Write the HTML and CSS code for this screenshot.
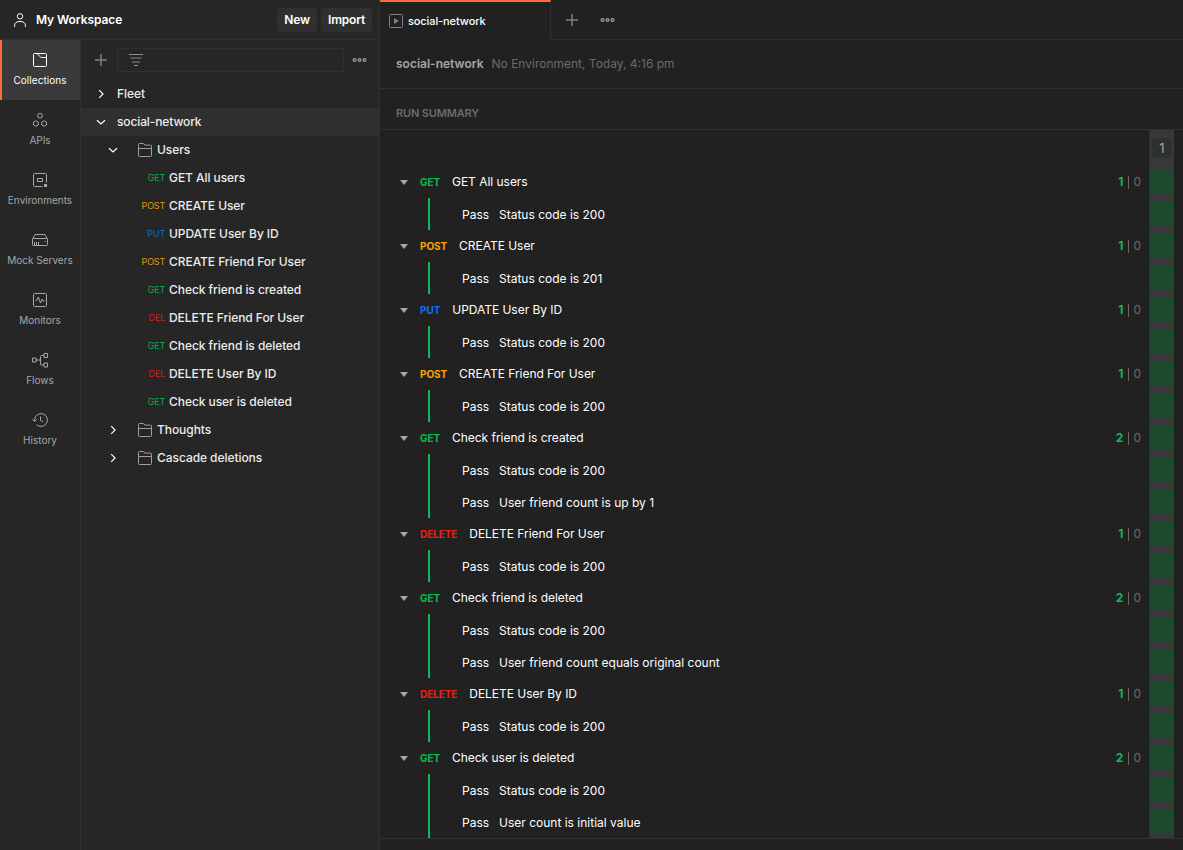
FILE: index.html
```
<!DOCTYPE html>
<html lang="en">
<head>
<meta charset="utf-8">
<title>My Workspace</title>
<link rel="stylesheet" href="styles.css">
</head>
<body>
<svg class="defs" width="0" height="0">
  <symbol id="right" viewBox="0 0 10 10"><path d="M3.2 1.2 7 5 3.2 8.8"/></symbol>
  <symbol id="down" viewBox="0 0 10 10"><path d="M1 3.2 5 7l4-3.8"/></symbol>
  <symbol id="folder" viewBox="0 0 14 14"><path d="M.5 12.5V1.5q0-1 1-1h3.7L7 2.1h5.5q1 0 1 1v9.4q0 1-1 1h-11q-1 0-1-1zM.5 5.5h13"/></symbol>
  <symbol id="dots" viewBox="0 0 15 6"><circle cx="2.5" cy="3" r="1.5"/><circle cx="7.5" cy="3" r="1.5"/><circle cx="12.5" cy="3" r="1.5"/></symbol>
  <symbol id="plus" viewBox="0 0 12 12"><path d="M6 0v12M0 6h12"/></symbol>
</svg>
<div class="app">
  <div class="left">
    <header class="top">
      <svg class="user" width="12" height="14" viewBox="0 0 12 14"><circle cx="6" cy="3.3" r="2.7"/><path d="M.6 14v-1.5Q.6 8.500 6 8.500t5.400 4V14"/></svg>
      <span class="ws">My Workspace</span>
      <button class="btn new">New</button>
      <button class="btn import">Import</button>
    </header>
    <div class="cols">
      <nav class="rail">
        <a class="item active"><svg width="16" height="16" viewBox="0 0 16 16"><path d="M1.500 2.500q0-1 1-1h11q1 0 1 1v11q0 1-1 1h-11q-1 0-1-1zM5 1.500l4 4h5.500"/></svg><span>Collections</span></a>
        <a class="item"><svg width="16" height="16" viewBox="0 0 16 16"><path d="M8 1.300 10.200 2.500v2.600L8 6.300 5.800 5.100V2.500zM3.900 8.800l2.300 1.200v3l-2.300 1.300L1.500 13v-3zM12.100 8.800l2.400 1.200v3l-2.400 1.300L9.800 13v-3z"/></svg><span>APIs</span></a>
        <a class="item"><svg width="16" height="16" viewBox="0 0 16 16"><path d="M10.500 14.500h-8q-1 0-1-1v-11q0-1 1-1h11q1 0 1 1v8M5.500 6.500h5v3h-5z"/><path class="solid" d="M12 12h3v3h-3z"/></svg><span>Environments</span></a>
        <a class="item"><svg width="16" height="16" viewBox="0 0 16 16"><path d="M.5 7.500 3 2.500h10l2.500 5M1.500 6.500h13q1 0 1 1v5q0 1-1 1h-13q-1 0-1-1v-5q0-1 1-1zM2.500 13v-3M4.500 13v-3M6.500 13v-3M12.500 9.500h1"/></svg><span>Mock Servers</span></a>
        <a class="item"><svg width="16" height="16" viewBox="0 0 16 16"><path d="M1.500 2.500q0-1 1-1h11q1 0 1 1v11q0 1-1 1h-11q-1 0-1-1zM3.500 8.500h1.200L6.300 5l2.200 6 1.700-4 1.300 2.500 1-1"/></svg><span>Monitors</span></a>
        <a class="item"><svg width="16" height="16" viewBox="0 0 16 16"><path d="M.5 6h3.500v4H.500zM12 1.500h3.500v4H12zM12 11h3.500v4H12zM4 8h4.500M12 3.500H9.500q-1 0-1 1V12q0 1 1 1H12"/></svg><span>Flows</span></a>
        <a class="item"><svg width="16" height="16" viewBox="0 0 16 16"><path d="M2.600 9V7.500a6.400 6.400 0 1 1 2 5.200M.4 7.300l2.200 2.200 2.200-2.200M8.500 4.500V8.500l2.500 1.200"/></svg><span>History</span></a>
      </nav>
      <aside class="side">
        <div class="tools">
          <svg class="plus" width="12" height="12"><use href="#plus"/></svg>
          <div class="filter"><svg width="14" height="12" viewBox="0 0 14 12"><path d="M0 .5h14M1.500 4h11M3 8h8M5 11.500h4"/></svg></div>
          <svg class="dots" width="15" height="6"><use href="#dots"/></svg>
        </div>
        <div class="row"><svg class="chev" width="10" height="10"><use href="#right"/></svg>Fleet</div>
        <div class="row selected"><svg class="chev" width="10" height="10"><use href="#down"/></svg>social-network</div>
        <div class="row sub"><svg class="chev" width="10" height="10"><use href="#down"/></svg><svg class="folder" width="14" height="14"><use href="#folder"/></svg>Users</div>
        <div class="row req"><i class="get">GET</i>GET All users</div>
        <div class="row req"><i class="post">POST</i>CREATE User</div>
        <div class="row req"><i class="put">PUT</i>UPDATE User By ID</div>
        <div class="row req"><i class="post">POST</i>CREATE Friend For User</div>
        <div class="row req"><i class="get">GET</i>Check friend is created</div>
        <div class="row req"><i class="delete">DEL</i>DELETE Friend For User</div>
        <div class="row req"><i class="get">GET</i>Check friend is deleted</div>
        <div class="row req"><i class="delete">DEL</i>DELETE User By ID</div>
        <div class="row req"><i class="get">GET</i>Check user is deleted</div>
        <div class="row sub"><svg class="chev" width="10" height="10"><use href="#right"/></svg><svg class="folder" width="14" height="14"><use href="#folder"/></svg>Thoughts</div>
        <div class="row sub"><svg class="chev" width="10" height="10"><use href="#right"/></svg><svg class="folder" width="14" height="14"><use href="#folder"/></svg>Cascade deletions</div>
      </aside>
    </div>
  </div>
  <main class="main">
    <div class="tabs">
      <div class="tab"><svg width="14" height="14" viewBox="0 0 14 14"><rect x=".5" y=".5" width="13" height="13" rx="1"/><path d="M5 4l5 3-5 3z"/></svg>social-network</div>
      <div class="tabtools">
        <svg class="plus" width="12" height="12"><use href="#plus"/></svg>
        <svg class="dots" width="15" height="6"><use href="#dots"/></svg>
      </div>
    </div>
    <div class="info"><b>social-network</b><span>No Environment, Today, 4:16 pm</span></div>
    <div class="summary">RUN SUMMARY</div>
    <div class="results">
      <div class="list">
        <section><div class="head"><s></s><b class="get">GET</b><span>GET All users</span><em><b>1</b><u></u>0</em></div>
          <div class="tests"><p><span>Pass</span>Status code is 200</p></div></section>
        <section><div class="head"><s></s><b class="post">POST</b><span>CREATE User</span><em><b>1</b><u></u>0</em></div>
          <div class="tests"><p><span>Pass</span>Status code is 201</p></div></section>
        <section><div class="head"><s></s><b class="put">PUT</b><span>UPDATE User By ID</span><em><b>1</b><u></u>0</em></div>
          <div class="tests"><p><span>Pass</span>Status code is 200</p></div></section>
        <section><div class="head"><s></s><b class="post">POST</b><span>CREATE Friend For User</span><em><b>1</b><u></u>0</em></div>
          <div class="tests"><p><span>Pass</span>Status code is 200</p></div></section>
        <section><div class="head"><s></s><b class="get">GET</b><span>Check friend is created</span><em><b>2</b><u></u>0</em></div>
          <div class="tests"><p><span>Pass</span>Status code is 200</p><p><span>Pass</span>User friend count is up by 1</p></div></section>
        <section><div class="head"><s></s><b class="delete">DELETE</b><span>DELETE Friend For User</span><em><b>1</b><u></u>0</em></div>
          <div class="tests"><p><span>Pass</span>Status code is 200</p></div></section>
        <section><div class="head"><s></s><b class="get">GET</b><span>Check friend is deleted</span><em><b>2</b><u></u>0</em></div>
          <div class="tests"><p><span>Pass</span>Status code is 200</p><p><span>Pass</span>User friend count equals original count</p></div></section>
        <section><div class="head"><s></s><b class="delete">DELETE</b><span>DELETE User By ID</span><em><b>1</b><u></u>0</em></div>
          <div class="tests"><p><span>Pass</span>Status code is 200</p></div></section>
        <section><div class="head"><s></s><b class="get">GET</b><span>Check user is deleted</span><em><b>2</b><u></u>0</em></div>
          <div class="tests"><p><span>Pass</span>Status code is 200</p><p><span>Pass</span>User count is initial value</p></div></section>
      </div>
      <div class="iter">
        <div class="num">1</div>
        <div class="cells"><i></i><i></i><i></i><i></i><i></i><i></i><i></i><i></i><i></i><i></i><i></i><i></i><i></i><i></i><i></i><i></i><i></i><i></i><i></i><i></i><i></i></div>
      </div>
    </div>
  </main>
</div>
</body>
</html>
```
FILE: styles.css
```
* { box-sizing: border-box; }
body { margin: 0; background: #212121; color: #fff; font: 12px/16px Inter, sans-serif; }
i, em { font-style: normal; }
p { margin: 0; }
svg { flex: none; fill: none; stroke: currentColor; stroke-width: 1; }
.defs { position: absolute; }
.app { display: flex; width: 1183px; height: 850px; overflow: hidden; }

.left { width: 380px; flex: none; display: flex; flex-direction: column; background: #262626; border-right: 1px solid #303030; }
.top { height: 40px; display: flex; align-items: center; padding: 0 7px 0 14px; border-bottom: 1px solid #303030; }
.user { margin-top: 1px; }
.ws { margin-left: 10px; font-weight: 600; letter-spacing: -.08px; }
.btn { height: 24px; padding: 0; margin: 1px 0 0; border: 0; border-radius: 4px; background: #303030; color: #fff; font: 600 12px/16px Inter, sans-serif; letter-spacing: -.2px; }
.new { width: 40px; margin-left: auto; }
.import { width: 51px; margin-left: 4px; }
.cols { flex: 1; display: flex; }

.rail { width: 81px; border-right: 1px solid #303030; }
.item { height: 60px; display: flex; flex-direction: column; align-items: center; gap: 5px; padding-top: 12px; color: #a6a6a6; font-size: 10px; line-height: 15px; white-space: nowrap; }
.item.active { background: #3a3a3a; box-shadow: inset 2px 0 #ff6c37; color: #fff; }
.item.active span { letter-spacing: .05px; }
.solid { fill: currentColor; stroke: none; }

.side { flex: 1; }
.tools { height: 40px; display: flex; align-items: center; padding-left: 14px; }
.plus, .dots { color: #808080; }
.plus { stroke-width: 1.5; }
.dots { stroke-width: 1.2; color: #999; fill: #555; }
.filter { width: 227px; height: 24px; margin: 0 8px 0 10px; padding: 0 0 0 11px; display: flex; align-items: center; border: 1px solid #303030; border-radius: 2px; color: #8c8c8c; }
.row { height: 28px; display: flex; align-items: center; padding-left: 15px; color: #ececec; font-weight: 500; letter-spacing: -.06px; white-space: nowrap; }
.selected { background: #303030; letter-spacing: -.12px; }
.chev { margin-right: 11px; color: #fff; stroke-width: 1.2; }
.sub { padding-left: 27px; }
.sub .chev { margin-right: 20px; }
.folder { margin-right: 5px; color: #a0a0a0; }
.req { padding-left: 54px; }
.req i { width: 30px; margin-right: 4px; text-align: right; font-size: 9px; font-weight: 400; letter-spacing: -.2px; }
.get { color: #0cbb52; }
.post { color: #ffa400; }
.put { color: #146ff0; }
.delete { color: #eb2013; }
.req .get { color: #0fa94c; }
.req .post { color: #e09a08; }
.req .put { color: #1568c4; }
.req .delete { color: #c4231a; }

.main { flex: 1; display: flex; flex-direction: column; }
.tabs { height: 40px; display: flex; }
.tab { width: 171px; display: flex; align-items: center; gap: 5px; padding-left: 9px; border-top: 2px solid #ff6c37; border-right: 1px solid #303030; font-size: 11px; font-weight: 500; letter-spacing: -.1px; }
.tab svg { color: #808080; }
.tab path { fill: #808080; stroke: none; }
.tabtools { flex: 1; display: flex; align-items: center; gap: 22px; padding-left: 15px; border-bottom: 1px solid #303030; }
.info { height: 49px; display: flex; align-items: center; gap: 8px; padding-left: 16px; border-bottom: 1px solid #303030; color: #6b6b6b; }
.info b { color: #a6a6a6; font-weight: 600; }
.summary { height: 41px; padding: 16px 0 0 16px; border-bottom: 1px solid #303030; color: #6b6b6b; font-size: 11px; font-weight: 600; letter-spacing: -.15px; }
.results { height: 709px; display: flex; border-bottom: 1px solid #303030; }
.list { flex: 1; padding: 36px 8px 0 20px; }
.head { height: 32px; display: flex; align-items: center; }
.head > span { letter-spacing: -.03px; }
.head s { border: 4px solid transparent; border-top: 5px solid #a6a6a6; border-bottom: 0; margin-right: 12px; }
.head > b { font-size: 10px; font-weight: 700; margin-right: 12px; letter-spacing: -.08px; }
.head em { margin-left: auto; display: flex; align-items: center; color: #6b6b6b; }
.head em b { color: #0cbb52; font-weight: 700; }
.head u { width: 1px; height: 13px; margin: 0 4px 0 5px; background: #736458; }
.tests { margin-left: 28px; border-left: 2px solid #0cbb52; padding-left: 32px; }
.tests p { height: 32px; padding-top: 9px; display: flex; }
.tests span { width: 37px; }
.iter { width: 25px; margin-right: 9px; background: #383838; border-left: 1px solid #303030; }
.num { height: 20px; margin: 8px 2px 12px; border-radius: 4px; background: #303030; color: #a6a6a6; font-size: 13px; line-height: 21px; text-align: center; }
.cells { display: grid; gap: 8px; }
.cells i { height: 24px; background: #1c4a2c; }
```
